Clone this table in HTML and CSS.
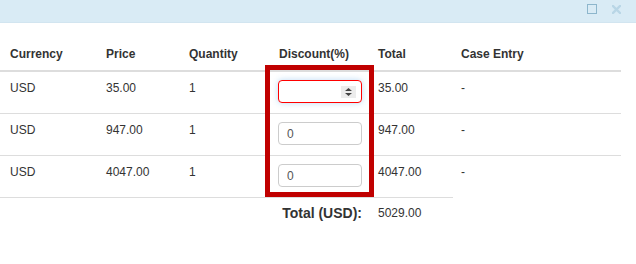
FILE: index.html
```html
<!DOCTYPE html>
<html lang="en">
<head>
  <meta charset="UTF-8" />
  <title>Order Items</title>
  <link rel="stylesheet" href="styles.css">
</head>
<body>
  <div class="modal">
    <div class="modal-header">
      <span class="btn-max" title="Maximize"></span>
      <span class="btn-close" title="Close">
        <svg width="9" height="9" viewBox="0 0 9 9"><path d="M1 1 L8 8 M8 1 L1 8" stroke="#b9d6e6" stroke-width="2.4" stroke-linecap="square"/></svg>
      </span>
    </div>

    <div class="modal-body">
      <div class="table-wrap">
        <table class="items">
          <colgroup>
            <col style="width:98px">
            <col style="width:83px">
            <col style="width:90px">
            <col style="width:99px">
            <col style="width:83px">
            <col>
          </colgroup>
          <thead>
            <tr>
              <th>Currency</th>
              <th>Price</th>
              <th>Quantity</th>
              <th>Discount(%)</th>
              <th>Total</th>
              <th>Case Entry</th>
            </tr>
          </thead>
          <tbody>
            <tr>
              <td>USD</td>
              <td>35.00</td>
              <td>1</td>
              <td class="input-cell">
                <div class="num-input invalid">
                  <input type="text" value="">
                  <span class="spinner">
                    <svg width="9" height="10" viewBox="0 0 9 10"><path d="M4.5 1 L8 4 L1 4 Z M4.5 9 L8 6 L1 6 Z" fill="#444"/></svg>
                  </span>
                </div>
              </td>
              <td>35.00</td>
              <td>-</td>
            </tr>
            <tr>
              <td>USD</td>
              <td>947.00</td>
              <td>1</td>
              <td class="input-cell"><div class="num-input"><input type="text" value="0"></div></td>
              <td>947.00</td>
              <td>-</td>
            </tr>
            <tr>
              <td>USD</td>
              <td>4047.00</td>
              <td>1</td>
              <td class="input-cell"><div class="num-input"><input type="text" value="0"></div></td>
              <td>4047.00</td>
              <td>-</td>
            </tr>
          </tbody>
          <tfoot>
            <tr>
              <td></td>
              <td></td>
              <td></td>
              <td class="total-label">Total (USD):</td>
              <td>5029.00</td>
              <td class="no-line"></td>
            </tr>
          </tfoot>
        </table>
        <!-- highlight around the discount column -->
        <div class="highlight"></div>
      </div>
    </div>
  </div>
</body>
</html>
```

FILE: styles.css
```css
body {
  margin: 0;
  font-family: "Liberation Sans", Arial, Helvetica, sans-serif;
  font-size: 12px;
  color: #333;
  background: #fff;
}
.modal {
  width: 636px;
  height: 264px;
  overflow: hidden;
}
.modal-header {
  height: 22px;
  background: #d9ebf5;
  border-bottom: 1px solid #d2e5f0;
  display: flex;
  align-items: center;
  justify-content: flex-end;
  gap: 15px;
  padding-right: 15px;
}
.btn-max {
  width: 8px;
  height: 8px;
  border: 1px solid #8db6cc;
  margin-top: -4px;
}
.btn-close {
  display: flex;
  margin-top: -4px;
}
.modal-body {
  padding: 14px 15px 0 0;
}
.table-wrap {
  position: relative;
}
.items {
  width: 621px;
  table-layout: fixed;
  border-collapse: collapse;
}
.items th {
  text-align: left;
  font-weight: bold;
  line-height: 17px;
  padding: 9px 8px 7px;
  vertical-align: bottom;
  border-bottom: 2px solid #ddd;
}
.items td {
  line-height: 17px;
  padding: 8px;
  height: 25px;
  vertical-align: top;
}
.items th:first-child,
.items td:first-child {
  padding-left: 10px;
}
.items td.input-cell {
  padding-left: 7px;
}
.items tbody tr + tr td {
  border-top: 1px solid #ddd;
}
.items tfoot td {
  border-top: 1px solid #ddd;
  padding-top: 7px;
}
.items tfoot td.no-line {
  border-top: none;
}
.total-label {
  text-align: right;
  font-size: 14px;
  font-weight: bold;
}
.num-input {
  display: flex;
  align-items: center;
  height: 21px;
  border: 1px solid #ccc;
  border-radius: 4px;
  background: #fff;
}
.num-input input {
  flex: 1;
  min-width: 0;
  border: none;
  outline: none;
  background: transparent;
  font-family: inherit;
  font-size: 12px;
  color: #555;
  padding: 0 8px;
}
.num-input.invalid {
  border-color: #f00;
  box-shadow: 0 0 6px rgba(102, 175, 233, 0.45);
}
.spinner {
  display: flex;
  align-items: center;
  justify-content: center;
  width: 15px;
  height: 12px;
  background: #ececec;
  margin-right: 5px;
}
.highlight {
  position: absolute;
  left: 265px;
  top: 28px;
  width: 99px;
  height: 122px;
  border: 5px solid #c00000;
  pointer-events: none;
}
```
